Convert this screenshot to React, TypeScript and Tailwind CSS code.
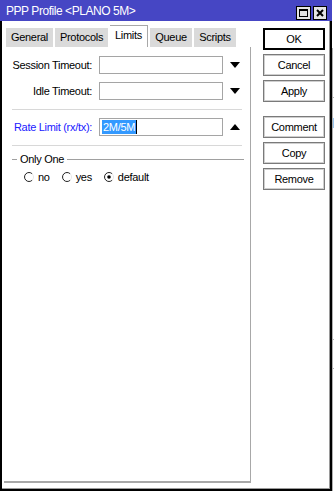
import React from 'react';

const font = "font-['Liberation_Sans',Arial,sans-serif]";

function Triangle({ up }: { up?: boolean }) {
  return (
    <svg width="10" height="6" viewBox="0 0 10 6" className="ml-[7px]">
      {up ? <path d="M0 6 L5 0 L10 6 Z" fill="#000" /> : <path d="M0 0 L10 0 L5 6 Z" fill="#000" />}
    </svg>
  );
}

function Radio({ checked, label }: { checked?: boolean; label: string }) {
  return (
    <div className="flex items-center gap-[4px]">
      <svg width="10" height="10" viewBox="0 0 10 10">
        <path d="M8.2 1.8 A4.5 4.5 0 1 0 8.2 8.2" fill="none" stroke="#202020" strokeWidth="1" />
        <path d="M8.2 1.8 A4.5 4.5 0 0 1 8.2 8.2" fill="none" stroke="#e8e8e8" strokeWidth="1" />
        {checked && <circle cx="5" cy="5" r="1.8" fill="#000" />}
      </svg>
      <span>{label}</span>
    </div>
  );
}

function Field({ label, blue, children, up }: { label: string; blue?: boolean; children?: React.ReactNode; up?: boolean }) {
  return (
    <div className="flex items-center h-[18px]">
      <div className={`w-[89px] pr-[1px] text-right whitespace-nowrap ${blue ? 'text-[#2020ff]' : 'text-black'}`}>{label}</div>
      <div className="ml-[6px] w-[124px] h-[18px] border border-[#a5a5a5] bg-white flex items-center px-[2px]">{children}</div>
      <Triangle up={up} />
    </div>
  );
}

function Btn({ label, primary }: { label: string; primary?: boolean }) {
  return (
    <div
      className={`h-[22px] w-[62px] flex items-center justify-center bg-white ${
        primary ? 'border-2 border-black' : 'border border-[#7a7a7a] shadow-[inset_0_0_0_1px_#cfcfcf]'
      }`}
    >
      {label}
    </div>
  );
}

const tabs = [
  { name: 'General', w: 'w-[47px]' },
  { name: 'Protocols', w: 'w-[53px]' },
  { name: 'Limits', w: 'w-[38px]', active: true },
  { name: 'Queue', w: 'w-[42px]' },
  { name: 'Scripts', w: 'w-[42px]' },
];

export default function App() {
  return (
    <div className={`w-[334px] h-[491px] bg-white flex text-[11px] tracking-[-0.3px] text-black ${font}`}>
      {/* window */}
      <div className="w-[332px] h-[491px] flex flex-col">
        {/* title bar */}
        <div className="h-[21px] bg-[#4646c4] flex items-end pl-[6px] pr-[5px] pb-[1px] shrink-0">
          <span className="text-white text-[12px] tracking-[-0.45px] leading-none mb-[3px]">PPP Profile &lt;PLANO 5M&gt;</span>
          <div className="ml-auto flex gap-[2px]">
            <div className="w-[15px] h-[14px] bg-[#e4e4e4] border border-black flex items-center justify-center">
              <div className="w-[9px] h-[8px] border border-black border-t-2" />
            </div>
            <div className="w-[14px] h-[14px] bg-[#e4e4e4] border border-black flex items-center justify-center">
              <svg width="8" height="8" viewBox="0 0 8 8">
                <path d="M1 1 L7 7 M7 1 L1 7" stroke="#000" strokeWidth="2" />
              </svg>
            </div>
          </div>
        </div>

        {/* body */}
        <div className="flex-1 border-l-2 border-r-2 border-b-2 border-black flex">
          <div className="flex-1 border-r border-b border-[#9a9a9a] flex">
            {/* left column: tabs + panel */}
            <div className="w-[249px] flex flex-col pb-[5px]">
              <div className="h-[26px] flex items-end pl-[4px] gap-[2px]">
                {tabs.map((t) =>
                  t.active ? (
                    <div
                      key={t.name}
                      className={`${t.w} h-[22px] bg-white border-t border-r border-[#a8a8a8] flex items-center justify-center pb-[2px]`}
                    >
                      {t.name}
                    </div>
                  ) : (
                    <div key={t.name} className={`${t.w} h-[19px] bg-[#dadada] flex items-center justify-center`}>
                      {t.name}
                    </div>
                  )
                )}
              </div>
              <div className="flex-1 ml-[2px] border-r border-b-2 border-[#a8a8a8] flex flex-col pt-[9px]">
                <Field label="Session Timeout:" />
                <div className="h-[8px]" />
                <Field label="Idle Timeout:" />
                <div className="mt-[9px] ml-[8px] mr-[8px] h-px bg-[#d8d8d8]" />
                <div className="h-[8px]" />
                <Field label="Rate Limit (rx/tx):" blue up>
                  <span className="bg-[#3399ff] text-white leading-[14px] px-[1px]">2M/5M</span>
                  <span className="w-px h-[14px] bg-black" />
                </Field>
                <div className="mt-[9px] ml-[8px] mr-[8px] h-px bg-[#d8d8d8]" />
                <div className="mt-[7px] ml-[8px] mr-[6px] flex items-center h-[13px]">
                  <div className="w-[5px] h-px bg-[#a0a0a0]" />
                  <span className="mx-[3px]">Only One</span>
                  <div className="flex-1 h-px bg-[#a0a0a0]" />
                </div>
                <div className="mt-[4px] ml-[20px] flex items-center gap-[12px] h-[14px]">
                  <Radio label="no" />
                  <Radio label="yes" />
                  <Radio label="default" checked />
                </div>
              </div>
            </div>

            {/* right column: buttons */}
            <div className="flex flex-col pl-[12px] pt-[7px] gap-[4px]">
              <Btn label="OK" primary />
              <Btn label="Cancel" />
              <Btn label="Apply" />
              <div className="h-[6px]" />
              <Btn label="Comment" />
              <Btn label="Copy" />
              <Btn label="Remove" />
            </div>
          </div>
        </div>
      </div>

      {/* edge of the window behind */}
      <div className="w-[2px] flex flex-col">
        <div className="h-[48px]" />
        <div className="flex-1 border-l border-[#b0b0b0] flex flex-col">
          <div className="h-[49px]" />
          <div className="h-px bg-[#b0b0b0]" />
          <div className="h-[20px]" />
          <div className="h-[10px] bg-[#9cc8f0]" />
          <div className="h-[211px]" />
          <div className="h-px bg-[#b0b0b0]" />
          <div className="h-[28px]" />
          <div className="h-px bg-[#b0b0b0]" />
        </div>
      </div>
    </div>
  );
}
